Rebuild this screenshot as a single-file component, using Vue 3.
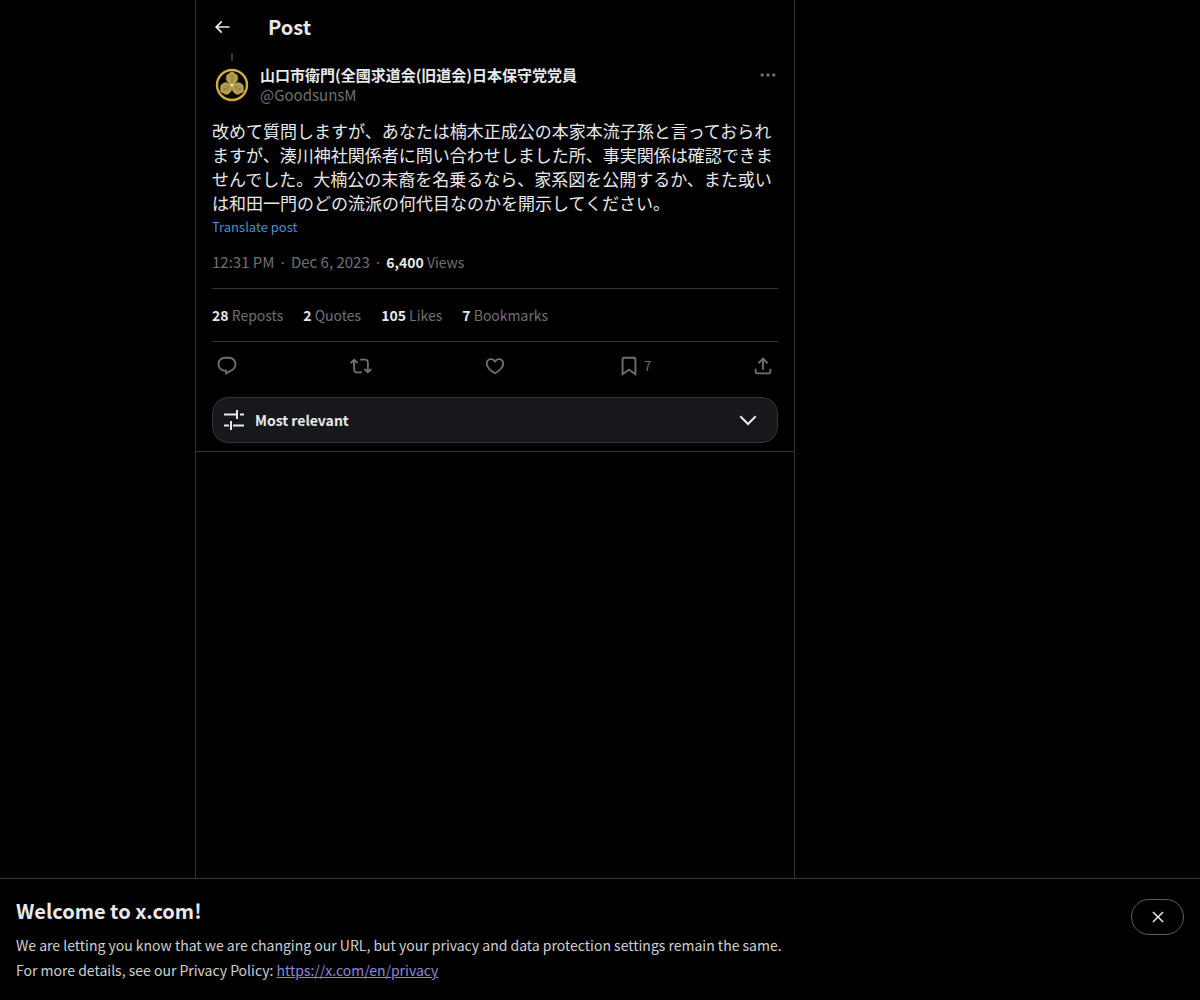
<script setup>
import { ref } from 'vue';

const showBanner = ref(true);
const sort = ref('relevant');

const stats = [
	{ value: '28', label: 'Reposts' },
	{ value: '2', label: 'Quotes' },
	{ value: '105', label: 'Likes' },
	{ value: '7', label: 'Bookmarks' },
];

const actions = [
	{
		name: 'Reply',
		path: 'M1.751 10c0-4.42 3.584-8 8.005-8h4.366c4.49 0 8.129 3.64 8.129 8.13 0 2.96-1.607 5.68-4.196 7.11l-8.054 4.46v-3.69h-.067c-4.49.1-8.183-3.51-8.183-8.01zm8.005-6c-3.317 0-6.005 2.69-6.005 6 0 3.37 2.77 6.08 6.138 6.01l.351-.01h1.761v2.3l5.087-2.81c1.951-1.08 3.163-3.13 3.163-5.36 0-3.39-2.744-6.13-6.129-6.13H9.756z',
	},
	{
		name: 'Repost',
		path: 'M4.5 3.88l4.432 4.14-1.364 1.46L5.5 7.55V16c0 1.1.896 2 2 2H13v2H7.5c-2.209 0-4-1.79-4-4V7.55L1.432 9.48.068 8.02 4.5 3.88zM16.5 6H11V4h5.5c2.209 0 4 1.79 4 4v8.45l2.068-1.93 1.364 1.46-4.432 4.14-4.432-4.14 1.364-1.46 2.068 1.93V8c0-1.1-.896-2-2-2z',
	},
	{
		name: 'Like',
		path: 'M16.697 5.5c-1.222-.06-2.679.51-3.89 2.16l-.805 1.09-.806-1.09C9.984 6.01 8.526 5.44 7.304 5.5c-1.243.07-2.349.78-2.91 1.91-.552 1.12-.633 2.78.479 4.82 1.074 1.97 3.257 4.27 7.129 6.61 3.87-2.34 6.052-4.64 7.126-6.61 1.111-2.04 1.03-3.7.477-4.82-.561-1.13-1.666-1.84-2.908-1.91zm4.187 7.69c-1.351 2.48-4.001 5.12-8.379 7.67l-.503.3-.504-.3c-4.379-2.55-7.029-5.19-8.382-7.67-1.36-2.5-1.41-4.86-.514-6.67.887-1.79 2.647-2.91 4.601-3.01 1.651-.09 3.368.56 4.798 2.01 1.429-1.45 3.146-2.1 4.796-2.01 1.954.1 3.714 1.22 4.601 3.01.896 1.81.846 4.17-.514 6.67z',
	},
	{
		name: 'Bookmark',
		count: 7,
		path: 'M4 4.5C4 3.12 5.119 2 6.5 2h11C18.881 2 20 3.12 20 4.5v18.44l-8-5.71-8 5.71V4.5zM6.5 4c-.276 0-.5.22-.5.5v14.56l6-4.29 6 4.29V4.5c0-.28-.224-.5-.5-.5h-11z',
	},
	{
		name: 'Share',
		path: 'M12 2.59l5.7 5.7-1.41 1.42L13 6.41V16h-2V6.41l-3.3 3.3-1.41-1.42L12 2.59zM21 15l-.02 3.51c0 1.38-1.12 2.49-2.5 2.49H5.5C4.11 21 3 19.88 3 18.5V15h2v3.5c0 .28.22.5.5.5h12.98c.28 0 .5-.22.5-.5L19 15h2z',
	},
];
</script>

<template>
	<div class="app">
		<main class="column">
			<header class="top-bar">
				<button class="back" type="button" aria-label="Back">
					<svg viewBox="0 0 24 24">
						<path d="M7.414 13l5.043 5.04-1.414 1.42L3.586 12l7.457-7.46 1.414 1.42L7.414 11H21v2H7.414z" />
					</svg>
				</button>
				<h2>Post</h2>
			</header>

			<article class="post">
				<div class="thread-line"></div>
				<div class="author">
					<svg class="avatar" viewBox="0 0 40 40" aria-hidden="true">
						<circle cx="20" cy="20" r="15" fill="#050505" stroke="#cfac45" stroke-width="2.4" />
						<!-- one leaf, turned three times round the centre -->
						<g v-for="angle in [0, 120, 240]" :key="angle" :transform="`rotate(${angle} 20 20)`">
							<path
								d="M20 19.5C17 18.500 14 16 14.300 13c-.2-2.300 1.200-3.900 3-4.300.6-1.200 1.800-1.700 2.700-1.700s2.100.5 2.700 1.700c1.800.4 3.200 2 3 4.300.3 3-2.700 5.500-5.700 6.500z"
								fill="#b5a04a"
								stroke="#c5ae55"
								stroke-width=".6"
							/>
							<path
								d="M20 18V9M20 16.500l-3.500-4M20 16.500l3.500-4M20 13l-2-2.500M20 13l2-2.500"
								fill="none"
								stroke="#7d7440"
								stroke-width=".6"
							/>
							<path d="M20 20l-3.600 5.500" fill="none" stroke="#b59b48" stroke-width=".6" />
						</g>
						<circle cx="20" cy="20" r="1.600" fill="#e6dfc4" />
					</svg>
					<div class="names">
						<span class="name">山口市衛門(全國求道会(旧道会)日本保守党党員</span>
						<span class="handle">@GoodsunsM</span>
					</div>
					<button class="more" type="button" aria-label="More">
						<svg viewBox="0 0 24 24">
							<path d="M3 12c0-1.100.9-2 2-2s2 .9 2 2-.9 2-2 2-2-.9-2-2zm9 2c1.100 0 2-.9 2-2s-.9-2-2-2-2 .9-2 2 .9 2 2 2zm7 0c1.100 0 2-.9 2-2s-.9-2-2-2-2 .9-2 2 .9 2 2 2z" />
						</svg>
					</button>
				</div>

				<p class="content" lang="ja">改めて質問しますが、あなたは楠木正成公の本家本流子孫と言っておられますが、湊川神社関係者に問い合わせしました所、事実関係は確認できませんでした。大楠公の末裔を名乗るなら、家系図を公開するか、また或いは和田一門のどの流派の何代目なのかを開示してください。</p>
				<button class="translate" type="button">Translate post</button>

				<div class="meta">
					<span>12:31 PM</span>
					<span class="dot">·</span>
					<span>Dec 6, 2023</span>
					<span class="dot">·</span>
					<span class="views"><strong>6,400</strong> Views</span>
				</div>

				<div class="stats">
					<span v-for="stat in stats" :key="stat.label">
						<strong>{{ stat.value }}</strong> {{ stat.label }}
					</span>
				</div>

				<div class="actions">
					<button
						v-for="action in actions"
						:key="action.name"
						type="button"
						:aria-label="action.name"
					>
						<svg viewBox="0 0 24 24"><path :d="action.path" /></svg>
						<span v-if="action.count">{{ action.count }}</span>
					</button>
				</div>

				<label class="sort">
					<svg class="sliders" viewBox="0 0 24 24" aria-hidden="true">
						<path d="M2 6.500h12M18 6.500h4M15 2v9M2 17.500h5M11 17.500h11M9 13v9" />
					</svg>
					<select v-model="sort" aria-label="Sort replies">
						<option value="relevant">Most relevant</option>
						<option value="recent">Most recent</option>
						<option value="liked">Most liked</option>
					</select>
					<svg class="chevron" viewBox="0 0 24 24" aria-hidden="true">
						<path d="M3.543 8.960l1.414-1.420L12 14.590l7.043-7.050 1.414 1.420L12 17.410 3.543 8.960z" />
					</svg>
				</label>
			</article>
		</main>

		<section v-if="showBanner" class="banner">
			<div>
				<h2>Welcome to x.com!</h2>
				<p>We are letting you know that we are changing our URL, but your privacy and data protection settings remain the same.</p>
				<p>For more details, see our Privacy Policy: <a href="https://x.com/en/privacy">https://x.com/en/privacy</a></p>
			</div>
			<button type="button" aria-label="Close" @click="showBanner = false">
				<svg viewBox="0 0 24 24">
					<path d="M10.590 12L4.540 5.960l1.420-1.420L12 10.590l6.040-6.050 1.420 1.420L13.410 12l6.050 6.040-1.420 1.420L12 13.410l-6.040 6.050-1.420-1.420L10.590 12z" />
				</svg>
			</button>
		</section>
	</div>
</template>

<style>
body {
	background-color: #000;
}
</style>

<style scoped>
.app {
	--text: #e7e9ea;
	--muted: #6e7072;
	--line: #333537;
	display: flex;
	flex-direction: column;
	min-height: 100vh;
	background-color: #000;
	color: var(--text);
	font-family: 'Noto Sans CJK JP', sans-serif;
	font-size: 15px;
	line-height: 20px;
}

* {
	box-sizing: border-box;
}

h2,
p {
	margin: 0;
}

h2 {
	font-size: 20px;
	line-height: 24px;
}

button {
	padding: 0;
	border: none;
	background: none;
	color: inherit;
	font: inherit;
	cursor: pointer;
}

svg {
	display: block;
	flex-shrink: 0;
	fill: currentColor;
}

.column {
	flex: 1;
	width: 100%;
	max-width: 600px;
	margin-left: 195px;
	border: 1px solid var(--line);
	border-width: 0 1px;
}

.top-bar {
	display: flex;
	align-items: center;
	gap: 36px;
	height: 53px;
	padding: 0 16px;
}

.back svg {
	width: 20px;
	height: 20px;
}

.post {
	padding: 0 16px 8px;
	border-bottom: 1px solid var(--line);
}

.thread-line {
	width: 2px;
	height: 8px;
	margin: 0 19px 4px;
	background-color: var(--line);
}

.author {
	display: flex;
	align-items: flex-start;
	gap: 8px;
}

.avatar {
	width: 40px;
	height: 40px;
}

.names {
	display: flex;
	flex: 1;
	flex-direction: column;
}

.name {
	font-weight: 700;
}

.handle,
.more {
	color: var(--muted);
}

.more svg {
	width: 20px;
	height: 20px;
}

.content {
	margin-top: 14px;
	font-size: 17px;
	line-height: 24px;
}

.translate {
	display: block;
	color: #4a90cf;
	font-size: 13px;
	line-height: 24px;
}

.meta {
	display: flex;
	padding: 13px 0 16px;
	border-bottom: 1px solid var(--line);
	color: var(--muted);
}

.dot {
	padding: 0 4px;
}

.views,
.stats {
	font-size: 14px;
}

strong {
	color: var(--text);
}

.stats {
	display: flex;
	flex-wrap: wrap;
	gap: 20px;
	padding: 16px 0;
	border-bottom: 1px solid var(--line);
	color: var(--muted);
}

.actions {
	display: flex;
	align-items: center;
	justify-content: space-between;
	height: 47px;
	padding: 0 4px;
	color: var(--muted);
}

.actions button {
	display: flex;
	align-items: center;
	gap: 4px;
	width: 22px;
	font-size: 13px;
}

.actions svg {
	width: 22px;
	height: 22px;
}

.sort {
	display: flex;
	align-items: center;
	height: 46px;
	margin-top: 8px;
	padding: 0 17px 0 9px;
	border: 1px solid var(--line);
	border-radius: 16px;
	background-color: #16181c;
}

.sort select {
	flex: 1;
	margin: 0 9px;
	padding: 0;
	border: none;
	outline: none;
	appearance: none;
	background: none;
	color: inherit;
	font-family: inherit;
	font-size: 14px;
	font-weight: 700;
	line-height: 20px;
}

.sliders {
	width: 24px;
	height: 24px;
	stroke: currentColor;
	stroke-width: 2;
}

.chevron {
	width: 24px;
	height: 24px;
}

.banner {
	position: sticky;
	bottom: 0;
	display: flex;
	align-items: flex-start;
	justify-content: space-between;
	gap: 16px;
	padding: 20px 16px 17px;
	border-top: 1px solid var(--line);
	background-color: #000;
}

.banner h2 {
	margin-bottom: 10px;
}

.banner p {
	color: #cfd0d1;
	font-size: 14px;
	line-height: 25px;
}

.banner a {
	color: #8f86d8;
}

.banner button {
	display: flex;
	align-items: center;
	justify-content: center;
	width: 53px;
	height: 36px;
	border: 1px solid #5c6063;
	border-radius: 18px;
}

.banner button svg {
	width: 18px;
	height: 18px;
}
</style>
